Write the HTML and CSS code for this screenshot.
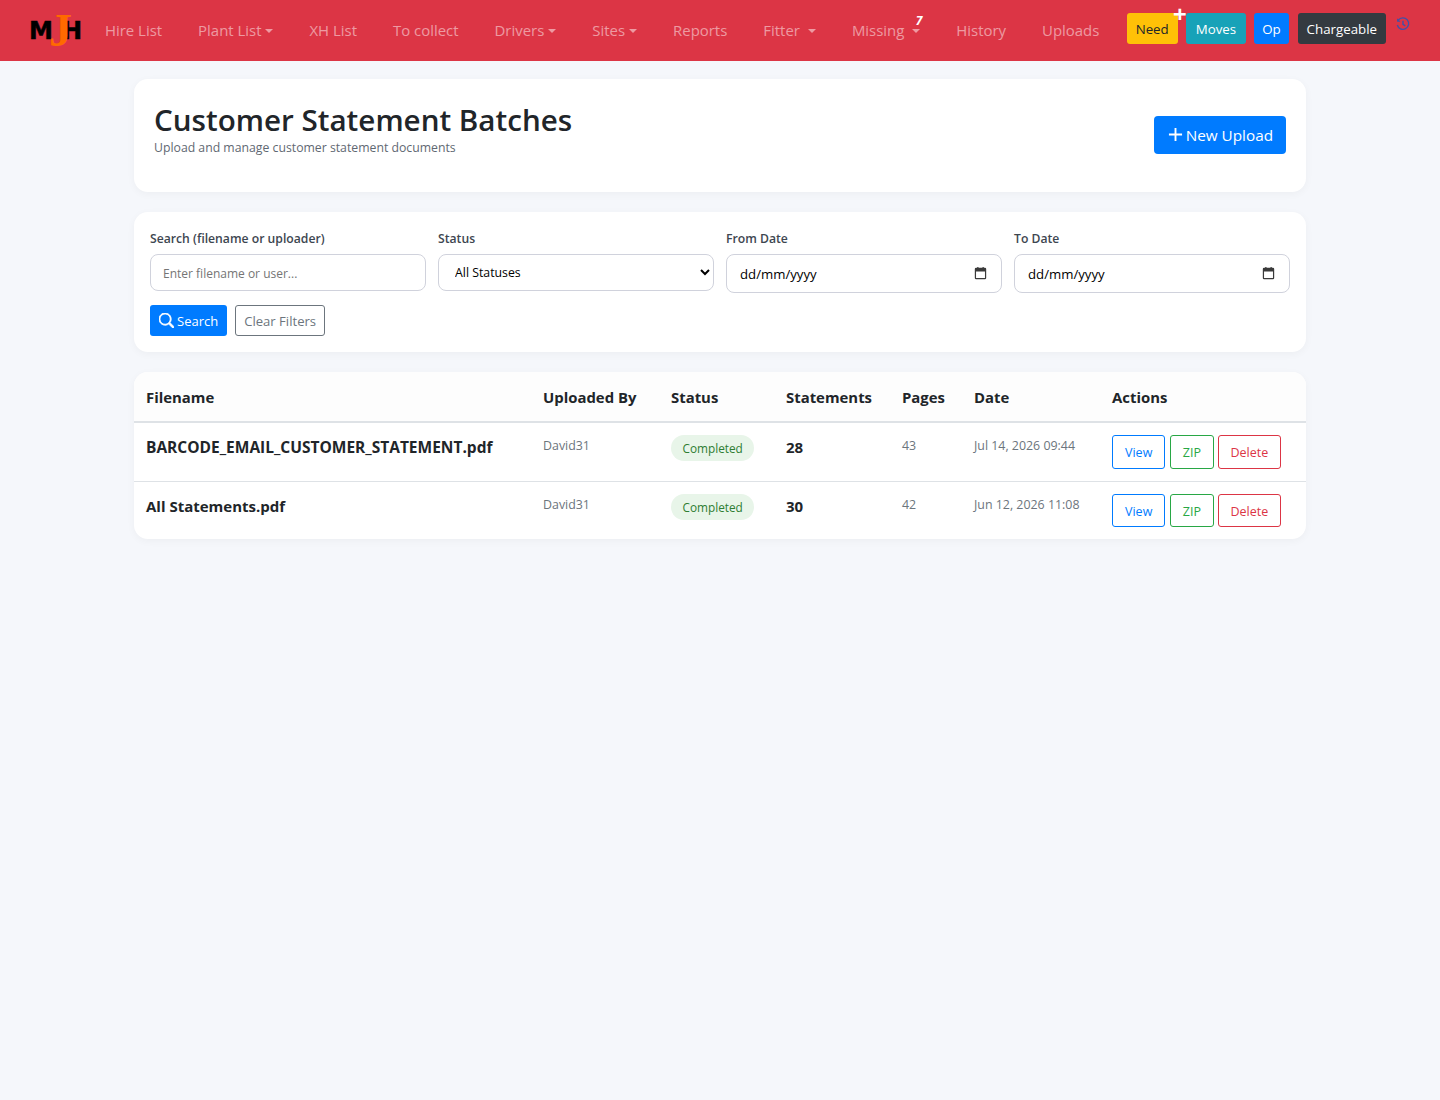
FILE: index.html
```html
<!DOCTYPE html>
<html lang="en-GB">
<head>
  <meta charset="UTF-8" />
  <title>Customer Statement Batches</title>
  <meta name="viewport" content="width=device-width, initial-scale=1.0" />
  <link rel="stylesheet" href="styles.css">
</head>
<body>
  <nav class="topbar">
    <a class="logo" href="#"><span>M</span><span>H</span><span class="logo-j">J</span></a>
    <ul class="nav-links">
      <li><a href="#">Hire List</a></li>
      <li><a href="#" class="caret">Plant List</a></li>
      <li><a href="#">XH List</a></li>
      <li><a href="#">To collect</a></li>
      <li><a href="#" class="caret">Drivers</a></li>
      <li><a href="#" class="caret">Sites</a></li>
      <li><a href="#">Reports</a></li>
      <li><a href="#" class="caret caret-wide">Fitter</a></li>
      <li><a href="#" class="caret caret-wide">Missing<span class="count">7</span></a></li>
      <li><a href="#">History</a></li>
      <li><a href="#">Uploads</a></li>
    </ul>
    <div class="nav-buttons">
      <a href="#" class="nav-btn need">Need<span class="need-plus">+</span></a>
      <a href="#" class="nav-btn moves">Moves</a>
      <a href="#" class="nav-btn op">Op</a>
      <a href="#" class="nav-btn chargeable">Chargeable</a>
      <a href="#" class="history-icon">
        <svg viewBox="0 0 16 16" width="14" height="14" fill="none" stroke="currentColor" stroke-width="1.6">
          <path d="M2.6 3.6A6.6 6.6 0 1 1 1.5 9.2" />
          <path d="M1.2 1.4v3.9h3.9z" fill="currentColor" stroke="none" />
          <path d="M8 4.4v4l2.6 1.7" />
        </svg>
      </a>
    </div>
  </nav>

  <main class="page">
    <section class="card page-head">
      <div>
        <h1>Customer Statement Batches</h1>
        <p>Upload and manage customer statement documents</p>
      </div>
      <a href="#" class="btn-new">
        <svg viewBox="0 0 16 16" width="15" height="15" fill="none" stroke="currentColor" stroke-width="2">
          <path d="M8 1v14M1 8h14" />
        </svg>
        New Upload
      </a>
    </section>

    <section class="card filters">
      <form>
        <div class="filter-row">
          <div class="field">
            <label for="search">Search (filename or uploader)</label>
            <input type="text" id="search" placeholder="Enter filename or user...">
          </div>
          <div class="field">
            <label for="status">Status</label>
            <select id="status">
              <option>All Statuses</option>
              <option>Completed</option>
            </select>
          </div>
          <div class="field">
            <label for="fromDate">From Date</label>
            <div class="date-box">
              <input type="text" id="fromDate" value="dd/mm/yyyy">
              <svg viewBox="0 0 16 16" width="13" height="13">
                <path fill="#3a3a3a" d="M2.5 1H4V0h1.5v1h5V0H12v1h1.5A1.5 1.5 0 0 1 15 2.500v11a1.500 1.500 0 0 1-1.500 1.500h-11A1.500 1.500 0 0 1 1 13.500v-11A1.500 1.500 0 0 1 2.500 1zm0 4.500v8h11v-8z" />
              </svg>
            </div>
          </div>
          <div class="field">
            <label for="toDate">To Date</label>
            <div class="date-box">
              <input type="text" id="toDate" value="dd/mm/yyyy">
              <svg viewBox="0 0 16 16" width="13" height="13">
                <path fill="#3a3a3a" d="M2.5 1H4V0h1.5v1h5V0H12v1h1.5A1.5 1.5 0 0 1 15 2.500v11a1.500 1.500 0 0 1-1.500 1.500h-11A1.500 1.500 0 0 1 1 13.500v-11A1.500 1.500 0 0 1 2.500 1zm0 4.500v8h11v-8z" />
              </svg>
            </div>
          </div>
        </div>
        <div class="filter-actions">
          <button type="button" class="btn-search">
            <svg viewBox="0 0 16 16" width="15" height="15" fill="currentColor">
              <path d="M11.742 10.344a6.5 6.5 0 1 0-1.397 1.398h-.001c.03.04.062.078.098.115l3.85 3.85a1 1 0 0 0 1.415-1.414l-3.85-3.85a1.007 1.007 0 0 0-.115-.1zM12 6.500a5.500 5.500 0 1 1-11 0 5.500 5.500 0 0 1 11 0z" stroke="currentColor" stroke-width=".9" />
            </svg>
            Search
          </button>
          <a href="#" class="btn-clear">Clear Filters</a>
        </div>
      </form>
    </section>

    <section class="card batches">
      <table>
        <thead>
          <tr>
            <th class="col-file">Filename</th>
            <th class="col-user">Uploaded By</th>
            <th class="col-status">Status</th>
            <th class="col-count">Statements</th>
            <th class="col-pages">Pages</th>
            <th class="col-date">Date</th>
            <th>Actions</th>
          </tr>
        </thead>
        <tbody>
          <tr>
            <td class="file file-long">BARCODE_EMAIL_CUSTOMER_STATEMENT.pdf</td>
            <td class="muted">David31</td>
            <td><span class="badge">Completed</span></td>
            <td class="count-cell">28</td>
            <td class="muted">43</td>
            <td class="muted">Jul 14, 2026 09:44</td>
            <td class="actions">
              <a href="#" class="act act-view">View</a>
              <a href="#" class="act act-zip">ZIP</a>
              <a href="#" class="act act-delete">Delete</a>
            </td>
          </tr>
          <tr>
            <td class="file">All Statements.pdf</td>
            <td class="muted">David31</td>
            <td><span class="badge">Completed</span></td>
            <td class="count-cell">30</td>
            <td class="muted">42</td>
            <td class="muted">Jun 12, 2026 11:08</td>
            <td class="actions">
              <a href="#" class="act act-view">View</a>
              <a href="#" class="act act-zip">ZIP</a>
              <a href="#" class="act act-delete">Delete</a>
            </td>
          </tr>
        </tbody>
      </table>
    </section>
  </main>
</body>
</html>
```

FILE: styles.css
```css
* { box-sizing: border-box; }
body {
  margin: 0;
  background: #f5f7fb;
  color: #212529;
  font-family: "Open Sans", "Noto Sans", Arial, sans-serif;
  font-size: 15px;
}
a { text-decoration: none; }

/* top navigation */
.topbar {
  display: flex;
  align-items: center;
  height: 61px;
  padding: 0 30px 0 31px;
  background: #dc3545;
}
.logo {
  position: relative;
  display: flex;
  justify-content: space-between;
  width: 53px;
  height: 20px;
  margin: 0 5px 0 -2px;
  color: #000;
  font-family: "DejaVu Sans", sans-serif;
  font-size: 24px;
  font-weight: bold;
  line-height: 20px;
  -webkit-text-stroke: .5px #000;
}
.logo-j {
  position: absolute;
  top: -3px;
  left: 20px;
  color: #ff6a00;
  font-family: "Liberation Serif", serif;
  font-size: 46px;
  line-height: 26px;
  -webkit-text-stroke: 0;
}
.nav-links {
  display: flex;
  flex: 1;
  margin: -2px 0 0;
  padding: 0;
  list-style: none;
}
.nav-links a {
  position: relative;
  display: block;
  padding: 0 18px;
  color: rgba(255,255,255,.5);
  font-size: 14.930px;
  white-space: nowrap;
}
.caret::after {
  content: "";
  display: inline-block;
  margin-left: 4px;
  vertical-align: 3px;
  border-top: 4px solid;
  border-left: 4px solid transparent;
  border-right: 4px solid transparent;
}
.caret-wide::after { margin-left: 8px; }
.nav-links .count {
  position: absolute;
  top: -8px;
  right: 16px;
  color: #fff;
  font-size: 12px;
  font-weight: bold;
  font-style: italic;
}
.nav-buttons {
  display: flex;
  align-items: center;
  gap: 8px;
  margin-top: -4px;
}
.nav-btn {
  position: relative;
  padding: 1px 9px 0;
  height: 31px;
  line-height: 30px;
  border-radius: 3px;
  color: #fff;
  font-size: 13.300px;
}
.need { background: #ffc107; color: #212529; }
.moves { padding: 1px 10px 0; background: #17a2b8; }
.op { padding: 1px 8px 0; background: #007bff; }
.chargeable { margin-left: 1px; background: #343a40; }
.need-plus {
  position: absolute;
  top: -6px;
  right: -9px;
  color: #fff;
  font-size: 24px;
  font-weight: bold;
  line-height: 14px;
}
.history-icon {
  display: flex;
  margin: -10px 0 0 2px;
  color: #4050a8;
}

/* page content */
.page {
  width: 1172px;
  margin: 18px auto 0;
}
.card {
  margin-bottom: 20px;
  background: #fff;
  border-radius: 14px;
  box-shadow: 0 2px 8px rgba(0,0,0,.04);
}
.page-head {
  display: flex;
  align-items: center;
  justify-content: space-between;
  height: 113px;
  padding: 0 20px 0;
}
.page-head h1 {
  margin: 0;
  font-size: 29.600px;
  font-weight: 600;
  line-height: 36px;
}
.page-head p {
  margin: 1px 0 12px;
  color: #5f6872;
  font-size: 12.250px;
  line-height: 18px;
}
.btn-new {
  display: flex;
  align-items: center;
  gap: 3px;
  height: 38px;
  margin-top: -2px;
  padding: 0 13px 0 14px;
  background: #007bff;
  border-radius: 4px;
  color: #fff;
  font-size: 15.300px;
}

/* filters */
.filters { padding: 16px; height: 140px; }
.filter-row {
  display: grid;
  grid-template-columns: repeat(4, 1fr);
  gap: 12px;
}
.field label {
  display: block;
  padding-top: 1px;
  height: 26px;
  color: #3d4650;
  font-size: 12.200px;
  font-weight: 600;
  line-height: 20px;
}
.field input, .field select {
  width: 100%;
  height: 37px;
  padding: 0 12px;
  background: #fff;
  border: 1px solid #d0d2dc;
  border-radius: 8px;
  color: #000;
  font-family: inherit;
  font-size: 12.300px;
}
.field input { padding-top: 1px; }
.field input::placeholder { color: #757575; opacity: 1; font-size: 12px; }
.date-box { position: relative; }
.date-box input { height: 39px; padding: 0 0 0 13px; font-size: 13.200px; }
.date-box svg {
  position: absolute;
  top: 13px;
  right: 15px;
}
.filter-actions {
  display: flex;
  gap: 8px;
  margin-top: 12px;
}
.btn-search, .btn-clear {
  display: flex;
  align-items: center;
  height: 31px;
  padding: 0 8px;
  border-radius: 3px;
  font-family: inherit;
  font-size: 13.100px;
}
.btn-search {
  gap: 3px;
  padding: 0 9px;
  background: #007bff;
  border: 0;
  color: #fff;
  font-size: 13px;
}
.btn-clear {
  border: 1px solid #6c757d;
  color: #6c757d;
}

/* table */
.batches { overflow: hidden; }
table {
  width: 100%;
  table-layout: fixed;
  border-collapse: separate;
  border-spacing: 0;
}
th {
  height: 51px;
  padding: 0 12px;
  background: #fdfdfd;
  border-bottom: 2px solid #dee2e6;
  font-size: 14.900px;
  font-weight: 700;
  text-align: left;
}
.col-file { width: 397px; }
.col-user { width: 128px; }
.col-status { width: 115px; }
.col-count { width: 116px; }
.col-pages { width: 72px; }
.col-date { width: 138px; }
td {
  height: 59px;
  padding: 12px 12px 0;
  border-bottom: 1px solid #dee2e6;
  vertical-align: top;
}
tbody tr:last-child td { height: 57px; border-bottom: 0; }
.file {
  padding-top: 13px;
  font-size: 15px;
  font-weight: 700;
  line-height: 22px;
}
.file-long { font-size: 15.500px; }
.muted {
  padding-top: 14px;
  color: #6c757d;
  font-size: 12.400px;
  line-height: 18px;
}
.badge {
  display: inline-block;
  padding: 0 11.500px;
  height: 26px;
  background: #e8f5e9;
  border-radius: 13px;
  color: #2e7d32;
  font-size: 11.800px;
  font-weight: 500;
  line-height: 26px;
}
.count-cell {
  padding-top: 13px;
  font-size: 15px;
  font-weight: 700;
  line-height: 22px;
}
.actions { white-space: nowrap; font-size: 0; }
.act {
  display: inline-block;
  height: 34px;
  padding: 1px 12px 0;
  border: 1px solid;
  border-radius: 3px;
  font-size: 12.500px;
  line-height: 32px;
}
tbody tr:last-child .act { height: 33px; }
.act-view { margin-right: 5px; color: #007bff; }
.act-zip { margin-right: 4px; padding: 1px 11.500px 0; color: #28a745; }
.act-delete { color: #dc3545; }
```
